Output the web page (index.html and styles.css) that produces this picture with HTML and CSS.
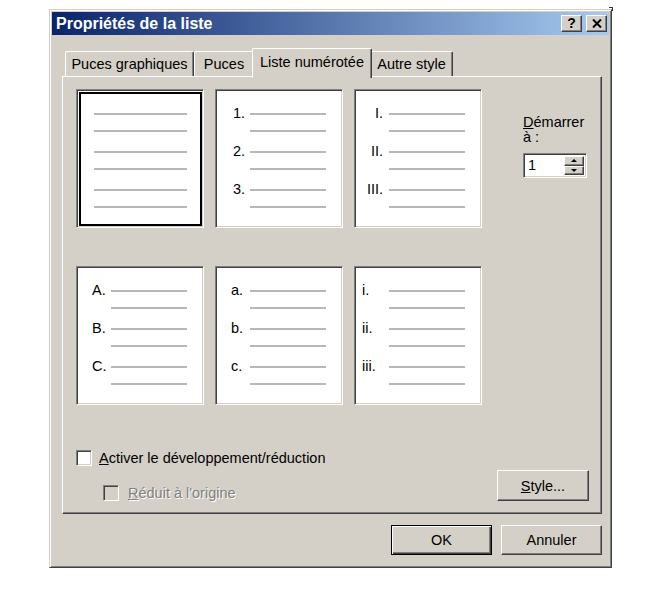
FILE: index.html
```html
<!DOCTYPE html>
<html lang="fr">
<head>
<meta charset="utf-8">
<title>Propriétés de la liste</title>
<link rel="stylesheet" href="styles.css">
</head>
<body>
<div class="corner-mark"></div>
<div class="dialog">
  <div class="titlebar">
    <span class="title">Propriétés de la liste</span>
    <div class="caps">
      <div class="capbtn help">?</div>
      <div class="capbtn close">
        <svg width="10" height="9" viewBox="0 0 10 9"><path d="M1 0.5 L9 8.5 M9 0.5 L1 8.5" stroke="#000" stroke-width="2" fill="none"/></svg>
      </div>
    </div>
  </div>
  <div class="body">
    <div class="tabs">
      <div class="tab t1">Puces graphiques</div>
      <div class="tab t2">Puces</div>
      <div class="tab active">Liste numérotée</div>
      <div class="tab t4">Autre style</div>
    </div>
    <div class="panel">
      <div class="top">
        <div class="grid">
          <div class="box plain sel">
            <div class="pair"><div class="row"><span class="lbl"></span><span class="line"></span></div><div class="row"><span class="lbl"></span><span class="line"></span></div></div>
            <div class="pair"><div class="row"><span class="lbl"></span><span class="line"></span></div><div class="row"><span class="lbl"></span><span class="line"></span></div></div>
            <div class="pair"><div class="row"><span class="lbl"></span><span class="line"></span></div><div class="row"><span class="lbl"></span><span class="line"></span></div></div>
          </div>
          <div class="box arabic">
            <div class="pair"><div class="row"><span class="lbl">1.</span><span class="line"></span></div><div class="row"><span class="lbl"></span><span class="line"></span></div></div>
            <div class="pair"><div class="row"><span class="lbl">2.</span><span class="line"></span></div><div class="row"><span class="lbl"></span><span class="line"></span></div></div>
            <div class="pair"><div class="row"><span class="lbl">3.</span><span class="line"></span></div><div class="row"><span class="lbl"></span><span class="line"></span></div></div>
          </div>
          <div class="box uroman">
            <div class="pair"><div class="row"><span class="lbl">I.</span><span class="line"></span></div><div class="row"><span class="lbl"></span><span class="line"></span></div></div>
            <div class="pair"><div class="row"><span class="lbl">II.</span><span class="line"></span></div><div class="row"><span class="lbl"></span><span class="line"></span></div></div>
            <div class="pair"><div class="row"><span class="lbl">III.</span><span class="line"></span></div><div class="row"><span class="lbl"></span><span class="line"></span></div></div>
          </div>
          <div class="box letters">
            <div class="pair"><div class="row"><span class="lbl">A.</span><span class="line"></span></div><div class="row"><span class="lbl"></span><span class="line"></span></div></div>
            <div class="pair"><div class="row"><span class="lbl">B.</span><span class="line"></span></div><div class="row"><span class="lbl"></span><span class="line"></span></div></div>
            <div class="pair"><div class="row"><span class="lbl">C.</span><span class="line"></span></div><div class="row"><span class="lbl"></span><span class="line"></span></div></div>
          </div>
          <div class="box letters">
            <div class="pair"><div class="row"><span class="lbl">a.</span><span class="line"></span></div><div class="row"><span class="lbl"></span><span class="line"></span></div></div>
            <div class="pair"><div class="row"><span class="lbl">b.</span><span class="line"></span></div><div class="row"><span class="lbl"></span><span class="line"></span></div></div>
            <div class="pair"><div class="row"><span class="lbl">c.</span><span class="line"></span></div><div class="row"><span class="lbl"></span><span class="line"></span></div></div>
          </div>
          <div class="box lroman">
            <div class="pair"><div class="row"><span class="lbl">i.</span><span class="line"></span></div><div class="row"><span class="lbl"></span><span class="line"></span></div></div>
            <div class="pair"><div class="row"><span class="lbl">ii.</span><span class="line"></span></div><div class="row"><span class="lbl"></span><span class="line"></span></div></div>
            <div class="pair"><div class="row"><span class="lbl">iii.</span><span class="line"></span></div><div class="row"><span class="lbl"></span><span class="line"></span></div></div>
          </div>
        </div>
        <div class="side">
          <div class="start-label"><u>D</u>émarrer<br>à :</div>
          <div class="spin">
            <span class="spin-val">1</span>
            <div class="spin-btns">
              <div class="spin-btn"><span class="tri up"></span></div>
              <div class="spin-btn"><span class="tri down"></span></div>
            </div>
          </div>
        </div>
      </div>
      <div class="bottom">
        <div class="checks">
          <div class="check-row">
            <span class="checkbox"></span>
            <span class="check-label"><u>A</u>ctiver le développement/réduction</span>
          </div>
          <div class="check-row sub disabled">
            <span class="checkbox"></span>
            <span class="check-label"><u>R</u>éduit à l'origine</span>
          </div>
        </div>
        <div class="btn style-btn"><span><u>S</u>tyle...</span></div>
      </div>
    </div>
    <div class="actions">
      <div class="btn default">OK</div>
      <div class="btn">Annuler</div>
    </div>
  </div>
</div>
</body>
</html>
```
FILE: styles.css
```css
html, body {
  margin: 0;
  padding: 0;
  background: #ffffff;
}

body {
  font-family: "Liberation Sans", Arial, sans-serif;
  font-size: 14.5px;
  color: #000;
  position: relative;
  width: 650px;
  height: 591px;
  overflow: hidden;
}

.corner-mark {
  position: absolute;
  left: 609px;
  top: 7px;
  width: 3px;
  height: 3px;
  border-top: 1px solid #333;
  border-right: 1px solid #333;
}

.dialog {
  margin: 9px 0 0 49px;
  width: 563px;
  box-sizing: border-box;
  background: #d4d0c8;
  border: 1px solid;
  border-color: #d4d0c8 #404040 #404040 #d4d0c8;
  box-shadow: inset 1px 1px #ffffff, inset -1px -1px #808080;
  padding: 2px;
}

.titlebar {
  height: 23px;
  display: flex;
  align-items: center;
  justify-content: space-between;
  background: linear-gradient(to right, #0a246a, #a6caf0);
  padding: 0 2px 0 4px;
}

.title {
  color: #fff;
  font-weight: bold;
  font-size: 16px;
  line-height: 23px;
}

.caps {
  display: flex;
  gap: 4px;
}

.capbtn {
  width: 21px;
  height: 17px;
  box-sizing: border-box;
  background: #d4d0c8;
  border: 1px solid;
  border-color: #fff #404040 #404040 #fff;
  box-shadow: inset -1px -1px #808080;
  display: flex;
  align-items: center;
  justify-content: center;
}

.help {
  font-weight: bold;
  font-size: 14px;
  line-height: 14px;
  padding-bottom: 1px;
}

.body {
  padding: 13px 7px 10px 10px;
}

.tabs {
  height: 28px;
  display: flex;
  align-items: flex-end;
  padding-left: 3px;
}

.tab {
  height: 25px;
  box-sizing: border-box;
  border: 1px solid;
  border-color: #fff #404040 transparent #fff;
  border-bottom: none;
  border-radius: 2px 2px 0 0;
  box-shadow: inset -1px 0 #808080;
  text-align: center;
  line-height: 15px;
  padding-top: 5px;
  background: #d4d0c8;
  white-space: nowrap;
}

.t1 { width: 129px; }
.t2 { width: 60px; }
.t4 { width: 83px; }

.tab.active {
  width: 120px;
  height: 30px;
  margin: 0 -2px -2px -2px;
  padding-top: 6px;
  position: relative;
  z-index: 1;
}

.panel {
  height: 438px;
  box-sizing: border-box;
  border: 1px solid;
  border-color: #fff #404040 #404040 #fff;
  box-shadow: inset -1px -1px #808080;
  padding: 12px 12px 12px 13px;
  display: flex;
  flex-direction: column;
}

.top {
  display: flex;
}

.grid {
  display: grid;
  grid-template-columns: repeat(3, 128px);
  grid-auto-rows: 139px;
  column-gap: 11px;
  row-gap: 38px;
}

.box {
  background: #fff;
  box-sizing: border-box;
  border: 1px solid;
  border-color: #808080 #fff #fff #808080;
  box-shadow: inset 1px 1px #404040, inset -1px -1px #d4d0c8;
  padding: 15px 16px 0 0;
}

.box.sel {
  box-shadow: inset 1px 1px #404040, inset -1px -1px #d4d0c8, inset 2px 2px #fff, inset 4px 4px #000, inset -3px -3px #000;
}

.pair {
  display: grid;
  grid-template-rows: 17px 17px;
  margin-bottom: 4px;
}

.row {
  display: flex;
  align-items: center;
}

.lbl {
  width: 34px;
  flex: none;
  box-sizing: border-box;
  line-height: 17px;
  white-space: nowrap;
}

.line {
  flex: 1;
  height: 2px;
  background: #b7b7b7;
}

.plain .lbl { width: 17px; }
.arabic .lbl { padding-left: 17px; }
.letters .lbl { padding-left: 15px; }
.uroman .lbl { text-align: right; padding-right: 6px; }
.lroman .lbl { padding-left: 7px; }

.side {
  margin-left: 41px;
  padding-top: 26px;
}

.start-label {
  line-height: 15px;
}

.spin {
  margin-top: 8px;
  width: 64px;
  height: 25px;
  box-sizing: border-box;
  background: #fff;
  border: 1px solid;
  border-color: #808080 #fff #fff #808080;
  box-shadow: inset 1px 1px #404040, inset -1px -1px #d4d0c8;
  display: flex;
  padding: 2px 2px 2px 2px;
}

.spin-val {
  flex: 1;
  padding-left: 2px;
  line-height: 19px;
}

.spin-btns {
  width: 20px;
  display: flex;
  flex-direction: column;
}

.spin-btn {
  flex: 1;
  box-sizing: border-box;
  background: #d4d0c8;
  border: 1px solid;
  border-color: #fff #404040 #404040 #fff;
  box-shadow: inset -1px -1px #808080;
  display: flex;
  align-items: center;
  justify-content: center;
}

.tri {
  width: 0;
  height: 0;
  border-left: 3px solid transparent;
  border-right: 3px solid transparent;
}

.tri.up { border-bottom: 3px solid #000; }
.tri.down { border-top: 3px solid #000; }

.bottom {
  margin-top: 45px;
  display: flex;
  justify-content: space-between;
  align-items: flex-end;
}

.checks {
  display: flex;
  flex-direction: column;
  gap: 19px;
}

.check-row {
  display: flex;
  align-items: center;
  height: 16px;
  gap: 7px;
}

.check-row.sub {
  padding-left: 27px;
  gap: 9px;
}

.checkbox {
  width: 16px;
  height: 16px;
  flex: none;
  box-sizing: border-box;
  background: #fff;
  border: 1px solid;
  border-color: #808080 #fff #fff #808080;
  box-shadow: inset 1px 1px #404040, inset -1px -1px #d4d0c8;
}

.disabled .checkbox {
  background: #d4d0c8;
}

.check-label {
  line-height: 16px;
  white-space: nowrap;
}

.disabled .check-label {
  color: #808080;
  text-shadow: 1px 1px 0 #fff;
}

.btn {
  box-sizing: border-box;
  background: #d4d0c8;
  border: 1px solid;
  border-color: #fff #404040 #404040 #fff;
  box-shadow: inset -1px -1px #808080;
  display: flex;
  align-items: center;
  justify-content: center;
  width: 101px;
  height: 30px;
}

.style-btn {
  width: 92px;
  height: 31px;
}

.btn.default {
  border: 1px solid #000;
  box-shadow: inset 1px 1px #fff, inset -1px -1px #404040, inset -2px -2px #808080;
}

.actions {
  margin-top: 11px;
  display: flex;
  justify-content: flex-end;
  gap: 9px;
}
```
